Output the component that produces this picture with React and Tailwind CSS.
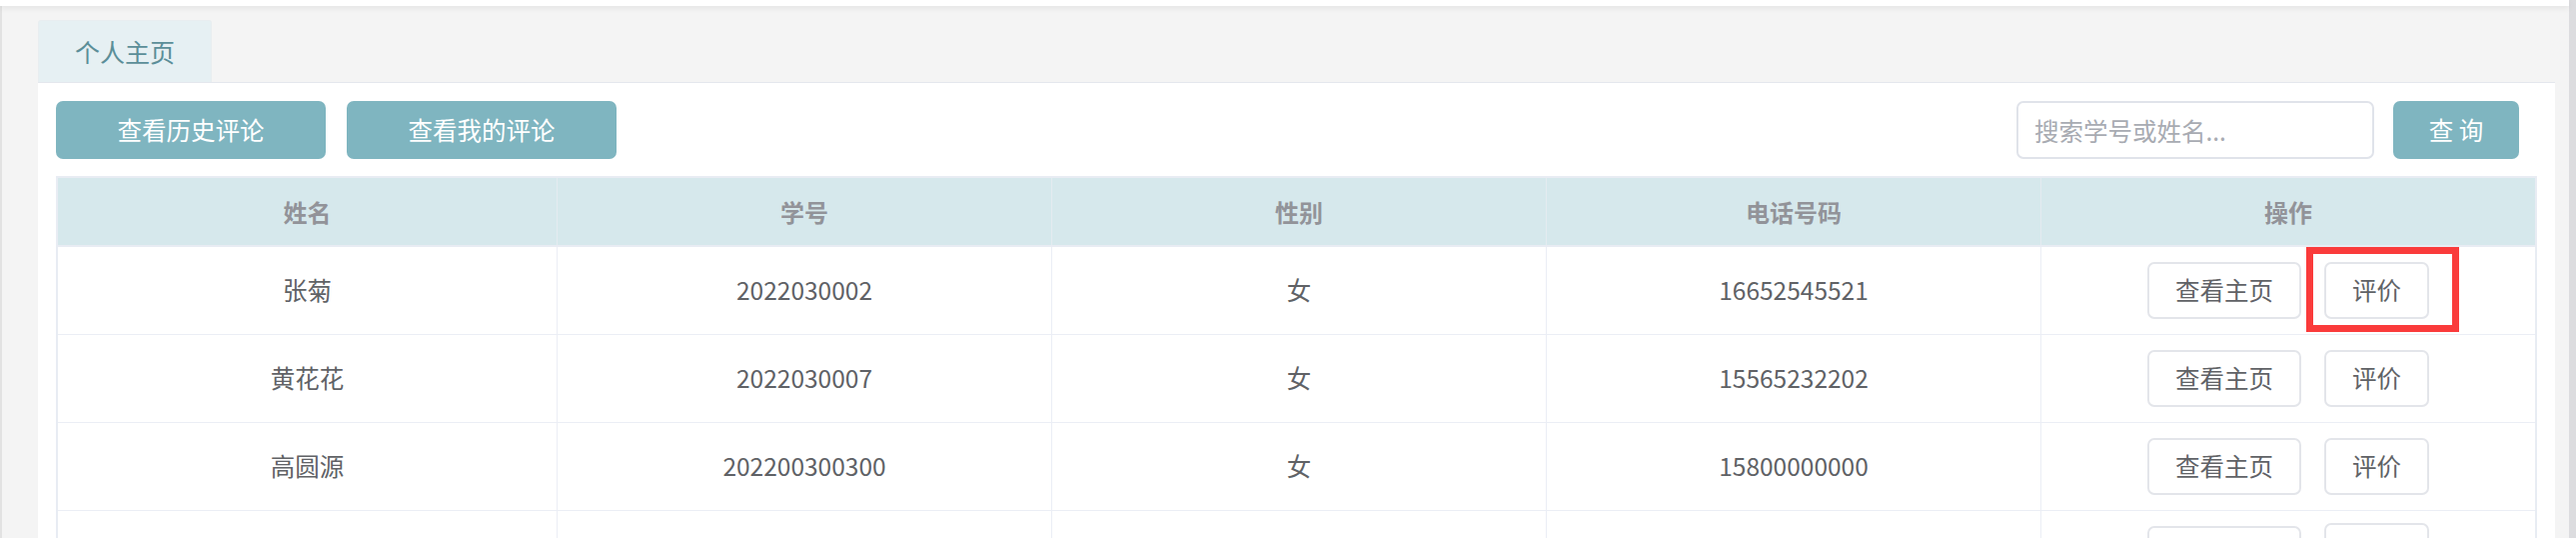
import React from 'react';

const rows = [
  { name: '张菊', id: '2022030002', sex: '女', phone: '16652545521', marked: true },
  { name: '黄花花', id: '2022030007', sex: '女', phone: '15565232202' },
  { name: '高圆源', id: '202200300300', sex: '女', phone: '15800000000' },
  // next row is only partly in view
  { name: '', id: '', sex: '', phone: '', partial: true },
];

const cols = ['姓名', '学号', '性别', '电话号码', '操作'];
const grid = 'grid grid-cols-[500px_495px_495px_495px_1fr]';

export default function App() {
  return (
    <div className="w-[2578px] h-[538px] flex overflow-hidden bg-[#f4f4f4] font-['Noto_Sans_CJK_SC','Microsoft_YaHei',sans-serif]">
      <div className="flex-1 flex flex-col">
        {/* top bar */}
        <div className="h-[6px] shrink-0 bg-white shadow-[0_2px_6px_rgba(0,0,0,0.08)] relative z-10"></div>

        <div className="flex-1 flex min-h-0">
          {/* left gutter */}
          <div className="w-[38px] shrink-0 border-l-2 border-[#e2e2e2]"></div>

          <div className="flex-1 flex flex-col min-w-0">
            {/* tab */}
            <div className="pt-[14px] flex">
              <div className="w-[174px] h-[62px] bg-[#e6f0f3] rounded-t-[3px] border border-b-0 border-[#e8edf0] flex items-center justify-center text-[25px] text-[#5b8e98]">
                个人主页
              </div>
            </div>

            {/* panel */}
            <div className="flex-1 bg-white border-t border-[#e4e7ed] px-[18px] pt-[18px]">
              {/* toolbar */}
              <div className="flex items-center justify-between pr-[18px]">
                <div className="flex gap-[21px]">
                  <button className="w-[270px] h-[58px] rounded-[7px] bg-[#7fb5c0] text-white text-[24.5px]">查看历史评论</button>
                  <button className="w-[270px] h-[58px] rounded-[7px] bg-[#7fb5c0] text-white text-[24.5px]">查看我的评论</button>
                </div>
                <div className="flex gap-[19px]">
                  <input
                    placeholder="搜索学号或姓名..."
                    className="w-[358px] h-[58px] rounded-[7px] border-2 border-[#e0e3ea] px-[16px] text-[24.5px] outline-none placeholder:text-[#a8abb2]"
                  />
                  <button className="w-[126px] h-[58px] rounded-[7px] bg-[#7fb5c0] text-white text-[24.5px]">查 询</button>
                </div>
              </div>

              {/* table */}
              <div className="mt-[17px] border-2 border-b-0 border-[#e8ecf3]">
                <div className={`${grid} h-[69px] bg-[#d6e8ec] border-b-2 border-[#e8ecf3]`}>
                  {cols.map((c, i) => (
                    <div
                      key={c}
                      className={`flex items-center justify-center text-[24px] font-bold text-[#929399] ${i < 4 ? 'border-r border-[#e4ebf0]' : ''}`}
                    >
                      {c}
                    </div>
                  ))}
                </div>

                {rows.map((r, idx) => (
                  <div key={idx} className={`${grid} h-[88px] border-b border-[#ebeef5] text-[24.5px] text-[#606266]`}>
                    <div className="flex items-center justify-center border-r border-[#ebeef5]">{r.name}</div>
                    <div className="flex items-center justify-center border-r border-[#ebeef5]">{r.id}</div>
                    <div className="flex items-center justify-center border-r border-[#ebeef5]">{r.sex}</div>
                    <div className="flex items-center justify-center border-r border-[#ebeef5]">{r.phone}</div>
                    <div className="flex items-center justify-center gap-[23px]">
                      <button className="w-[154px] h-[57px] rounded-[7px] border-2 border-[#e3e5ea] bg-white">
                        {r.partial ? '' : '查看主页'}
                      </button>
                      <span className="relative">
                        <button className="w-[105px] h-[57px] rounded-[7px] border-2 border-[#e3e5ea] bg-white">
                          {r.partial ? '' : '评价'}
                        </button>
                        {r.marked && (
                          <div className="absolute left-[-18px] top-[-15px] w-[153px] h-[85px] border-[7px] border-[#fa3b3b]"></div>
                        )}
                      </span>
                    </div>
                  </div>
                ))}
              </div>
            </div>
          </div>

          {/* right gutter */}
          <div className="w-[14px] shrink-0"></div>
        </div>
      </div>

      {/* scrollbar */}
      <div className="w-[7px] shrink-0 bg-[#dcdcdf]"></div>
    </div>
  );
}
